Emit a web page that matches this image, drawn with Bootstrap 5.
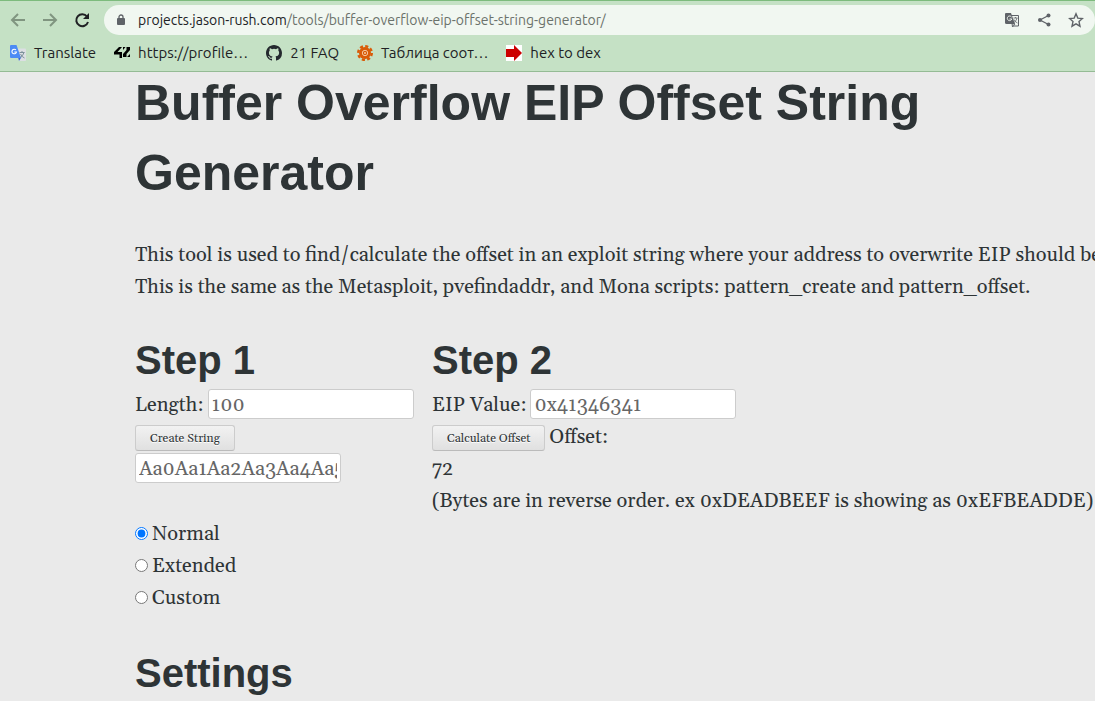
<!DOCTYPE html>
<html lang="en">
<head>
<meta charset="utf-8">
<meta name="viewport" content="width=device-width, initial-scale=1">
<title>Buffer Overflow EIP Offset String Generator</title>
<link href="https://cdn.jsdelivr.net/npm/bootstrap@5.3.0/dist/css/bootstrap.min.css" rel="stylesheet">
<style>
  body { background: #eaeaea; color: #2e3436; font-family: Georgia, Gelasio, "Liberation Serif", serif; font-size: 20px; line-height: 32px; }
  .browser { background: #c5e1c5; border-top: 1px solid #7dbb7d; border-bottom: 1px solid #95bb95; height: 72px; font-family: Ubuntu, "Noto Sans", sans-serif; color: #202124; position: relative; z-index: 1; }
  .toolbar { height: 38px; padding-left: 9px; gap: 14px; }
  .nav-btn { width: 18px; height: 18px; color: #809580; }
  .nav-btn svg, .tool svg { display: block; }
  .nav-btn.reload { color: #202124; }
  .address { height: 30px; border-radius: 15px; background: #f1f7f1; margin-left: -1px; padding: 0 11px; color: #5f6368; }
  .url { font-family: Ubuntu, "Open Sans", sans-serif; font-size: 14px; line-height: 20px; margin-left: 11px; color: #6b726b; }
  .url b { font-weight: 400; color: #202124; }
  .tools { gap: 16px; }
  .bookmarks { padding-left: 10px; gap: 18px; height: 28px; font-size: 15px; line-height: 20px; }
  .bookmarks a { color: #202124; gap: 8px; }
  .page { padding-left: 135px; margin-top: -4px; }
  h1, h2 { font-family: "Liberation Sans", Arial, sans-serif; font-weight: 700; margin: 0; }
  h1 { font-size: 50px; line-height: 70px; max-width: 860px; }
  h2 { font-size: 40px; line-height: 56px; }
  .intro { margin: 31px 0 29px; }
  .first-step { flex: 0 0 297px; }
  .line { height: 32px; gap: 4px; }
  .line label { padding-top: 2px; }
  .line span, .result { padding-top: 1px; }
  .field { width: 206px; height: 30px; border: 1px solid #ccc; border-radius: 3px; background: #fff; color: #666; padding: 1px 3px 0; font-size: 20px; }
  .action { height: 26px; margin-top: 5px; padding: 2px 14px 0; border: 1px solid #ccc; border-bottom-color: #bbb; border-radius: 3px; background: linear-gradient(#f2f2f2, #e0e0e0); color: #2e3436; font-size: 12px; line-height: 22px; text-shadow: 0 1px 0 #fff; }
  input[type=radio] { width: 13px; height: 13px; margin: 0; }
</style>
</head>
<body class="overflow-hidden">
<header class="browser">
  <div class="toolbar d-flex align-items-center">
    <button class="nav-btn btn p-0 border-0" aria-label="Back"><svg width="18" height="18" viewBox="0 0 18 18" fill="none" stroke="currentColor" stroke-width="2"><path d="M16 9H3M9 3L3 9l6 6"/></svg></button>
    <button class="nav-btn btn p-0 border-0" aria-label="Forward"><svg width="18" height="18" viewBox="0 0 18 18" fill="none" stroke="currentColor" stroke-width="2"><path d="M2 9h13M9 3l6 6-6 6"/></svg></button>
    <button class="nav-btn reload btn p-0 border-0" aria-label="Reload"><svg width="18" height="18" viewBox="0 0 18 18"><path d="M14 5.500A6 6 0 1 0 15 11" fill="none" stroke="currentColor" stroke-width="2"/><path d="M16 2v6h-6z" fill="currentColor"/></svg></button>
    <div class="address flex-grow-1 d-flex align-items-center">
      <svg width="12" height="14" viewBox="0 0 12 14"><rect x="2" y="5" width="8" height="7" rx="1" fill="#5f6368"/><path d="M4 6V4a2 2 0 0 1 4 0v2" fill="none" stroke="#5f6368" stroke-width="1.300"/></svg>
      <div class="url flex-grow-1 text-nowrap"><b>projects.jason-rush.com</b>/tools/buffer-overflow-eip-offset-string-generator/</div>
      <div class="tools d-flex">
        <button class="tool btn p-0 border-0" aria-label="Translate page"><svg width="16" height="16" viewBox="0 0 16 16"><path d="M7 3.500h7.500v10.500H8" fill="none" stroke="#5f6368"/><path d="M2 1h5l4 11H2.500A1.500 1.500 0 0 1 1 10.500V2a1 1 0 0 1 1-1z" fill="#5f6368"/><path d="M7.500 5A2.300 2.300 0 1 0 7.800 7H5.500" fill="none" stroke="#f1f7f1"/><path d="M8 12h3l-2.500 3zM9.500 6h4M11.500 5v1M13 6q-.5 3-3 4.500M10 7.500q1 2.500 3.500 3.500" fill="none" stroke="#5f6368" stroke-width=".8"/></svg></button>
        <button class="tool btn p-0 border-0" aria-label="Share"><svg width="16" height="16" viewBox="0 0 16 16" fill="#5f6368"><path d="M12.500 3.500L4 8l8.500 4.500" fill="none" stroke="#5f6368" stroke-width="1.300"/><circle cx="12.500" cy="3.500" r="2"/><circle cx="4" cy="8" r="2"/><circle cx="12.500" cy="12.500" r="2"/></svg></button>
        <button class="tool btn p-0 border-0" aria-label="Bookmark"><svg width="16" height="16" viewBox="0 0 16 16"><path d="M8 1.800l1.800 4.300 4.700.4-3.500 3.100 1 4.600L8 11.800l-4 2.400 1-4.600-3.500-3.100 4.700-.4z" fill="none" stroke="#5f6368" stroke-width="1.400"/></svg></button>
      </div>
    </div>
  </div>
  <nav class="bookmarks d-flex align-items-center text-nowrap" aria-label="Bookmarks">
    <a href="#" class="d-flex align-items-center text-decoration-none"><svg width="16" height="16" viewBox="0 0 16 16"><path d="M7 3.500h8a1 1 0 0 1 1 1V15a1 1 0 0 1-1 1H9z" fill="#dcdfe3"/><path d="M8 12h3.500L9 16z" fill="#3267d6"/><path d="M1 0h5.500l4.500 13H1a1 1 0 0 1-1-1V1a1 1 0 0 1 1-1z" fill="#4c8bf5"/><path d="M6 5A2.300 2.300 0 1 0 6.500 7H4.300" fill="none" stroke="#fff" stroke-width="1.100"/><path d="M9.500 7.500h5M12 6v1.500M14 7.500q-1 3.500-4 5M10.500 9q1.500 3 4 4" fill="none" stroke="#7c919b"/></svg>Translate</a>
    <a href="#" class="d-flex align-items-center text-decoration-none"><svg width="16" height="16" viewBox="0 0 16 16" fill="#000"><path d="M5 2h3L3.500 7H8v6H5.500V9.500H0V7zM9 2h2.500L9 5zM12.500 2H16v3l-3.500 4V12H9V9l3.500-4zM16 9v3h-3z"/></svg>https://profile…</a>
    <a href="#" class="d-flex align-items-center text-decoration-none"><svg width="16" height="16" viewBox="0 0 16 16" fill="#24292e"><path d="M8 0C3.580 0 0 3.580 0 8c0 3.540 2.290 6.530 5.470 7.590.4.070.55-.17.55-.38 0-.19-.01-.82-.01-1.490-2.010.37-2.530-.49-2.690-.94-.09-.23-.48-.94-.82-1.130-.28-.15-.68-.52-.01-.53.63-.01 1.080.58 1.230.82.72 1.210 1.870.87 2.330.66.070-.52.280-.87.510-1.070-1.780-.2-3.640-.89-3.640-3.950 0-.87.310-1.590.82-2.150-.08-.2-.36-1.020.080-2.120 0 0 .67-.21 2.200.82a7.600 7.600 0 0 1 4 0c1.530-1.040 2.200-.82 2.200-.82.44 1.100.16 1.920.08 2.120.51.56.82 1.270.82 2.150 0 3.070-1.870 3.750-3.650 3.950.29.25.54.73.54 1.480 0 1.070-.01 1.930-.01 2.200 0 .21.15.46.55.38A8 8 0 0 0 16 8c0-4.420-3.580-8-8-8z"/></svg>21 FAQ</a>
    <a href="#" class="d-flex align-items-center text-decoration-none"><svg width="16" height="16" viewBox="0 0 16 16"><circle cx="8" cy="8" r="6.800" fill="none" stroke="#d95b08" stroke-width="2.400" stroke-dasharray="3.100 2.240"/><circle cx="8" cy="8" r="6" fill="#d95b08"/><circle cx="8" cy="8" r="2.700" fill="none" stroke="#f5c8a0"/><circle cx="8" cy="8" r="1" fill="#f5c8a0"/></svg>Таблица соот…</a>
    <a href="#" class="d-flex align-items-center text-decoration-none"><svg width="16" height="16" viewBox="0 0 16 16"><path d="M0 0h16v16H0z" fill="#fff"/><path d="M0 4h8V0l8 8-8 8v-4H0z" fill="#c00"/></svg>hex to dex</a>
  </nav>
</header>
<main class="page">
  <h1>Buffer Overflow EIP Offset String Generator</h1>
  <p class="intro text-nowrap">This tool is used to find/calculate the offset in an exploit string where your address to overwrite EIP should be.<br>This is the same as the Metasploit, pvefindaddr, and Mona scripts: pattern_create and pattern_offset.</p>
  <div class="d-flex">
    <section class="first-step">
      <h2>Step 1</h2>
      <div class="line d-flex align-items-center"><label for="length">Length:</label><input class="field" id="length" value="100"></div>
      <div class="line d-flex align-items-start"><button class="action">Create String</button></div>
      <div class="line d-flex align-items-center"><input class="field" aria-label="Generated string" value="Aa0Aa1Aa2Aa3Aa4Aa5Aa6Aa7Aa8Aa9Ab0Ab1Ab2Ab3"></div>
    </section>
    <section class="text-nowrap">
      <h2>Step 2</h2>
      <div class="line d-flex align-items-center"><label for="eip">EIP Value:</label><input class="field" id="eip" value="0x41346341"></div>
      <div class="line d-flex align-items-start"><button class="action">Calculate Offset</button><span>Offset:</span></div>
      <div class="result">72<br>(Bytes are in reverse order. ex 0xDEADBEEF is showing as 0xEFBEADDE)</div>
    </section>
  </div>
  <div class="line d-flex align-items-center"><input type="radio" name="mode" id="normal" checked><label for="normal">Normal</label></div>
  <div class="line d-flex align-items-center"><input type="radio" name="mode" id="extended"><label for="extended">Extended</label></div>
  <div class="line d-flex align-items-center"><input type="radio" name="mode" id="custom"><label for="custom">Custom</label></div>
  <h2 class="mt-4 pt-2">Settings</h2>
</main>
<script src="https://cdn.jsdelivr.net/npm/bootstrap@5.3.0/dist/js/bootstrap.bundle.min.js"></script>
</body>
</html>
